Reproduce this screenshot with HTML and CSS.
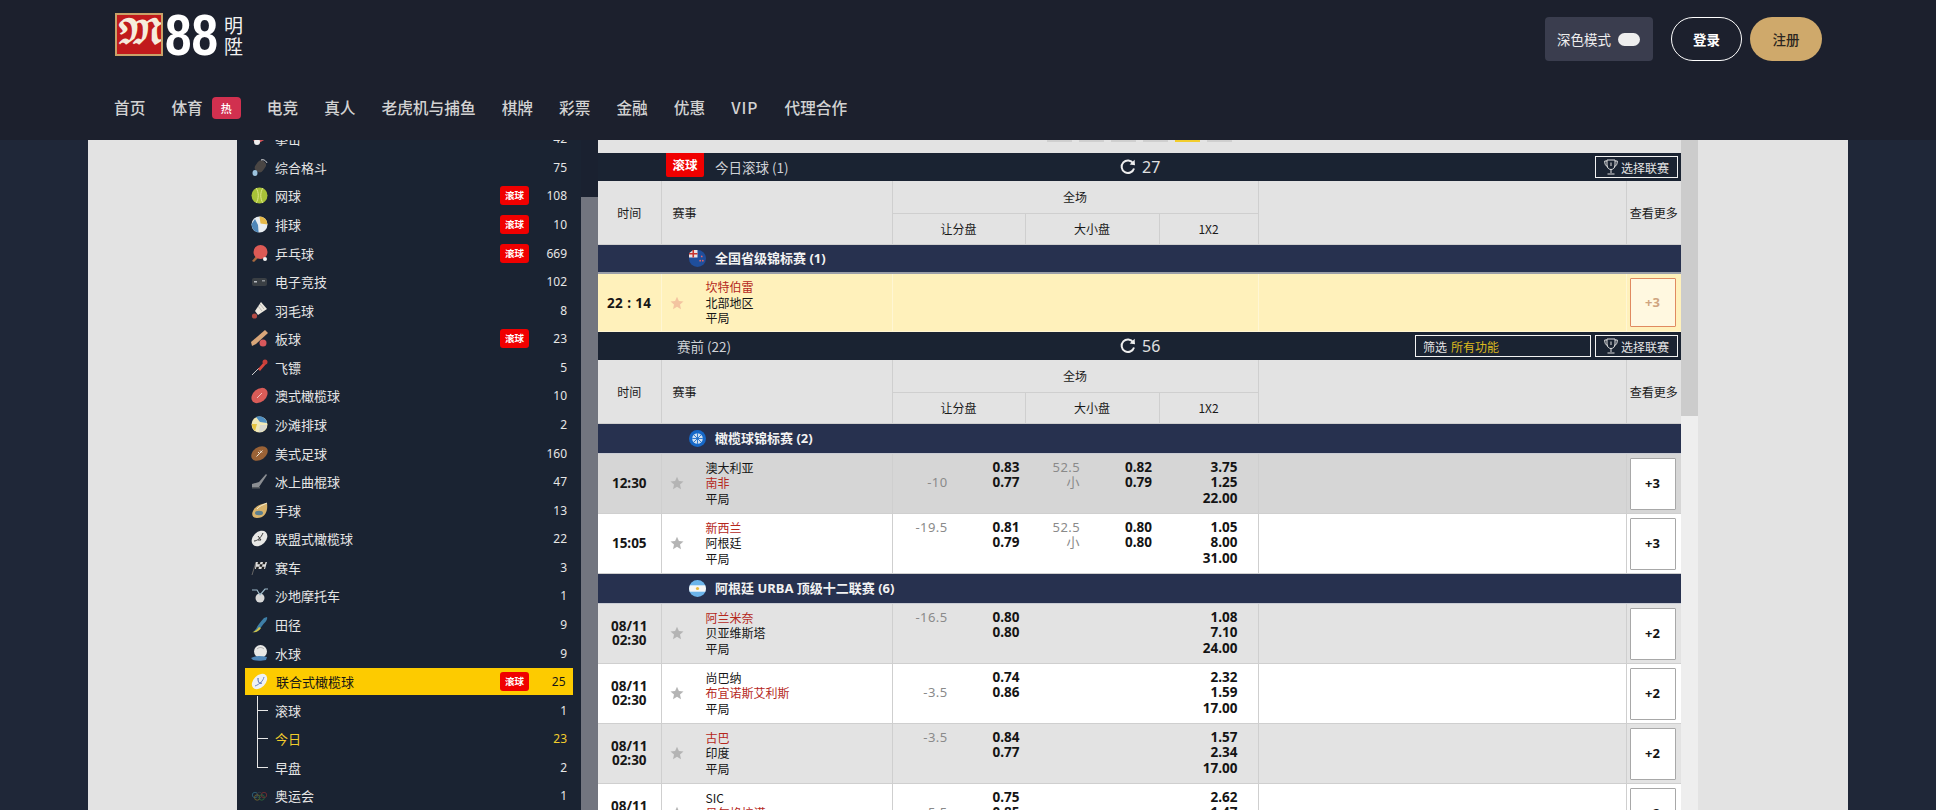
FILE: index.html
```html
<!DOCTYPE html>
<html lang="zh-CN">
<head>
<meta charset="utf-8">
<title>M88 明陞 - 体育</title>
<link rel="stylesheet" href="styles.css">
</head>
<body>
<svg class="defs" width="0" height="0" aria-hidden="true">
  <symbol id="refresh" viewBox="0 0 16 16"><path d="M13.2 4.2A6.3 6.3 0 1 0 14 9.5" fill="none" stroke="currentColor" stroke-width="2"/><path d="M9.6 5.4 15 6.2 14.6 .8z" fill="currentColor"/></symbol>
  <symbol id="trophy" viewBox="0 0 14 16"><path d="M3 1h8v5c0 3-2 4.500-4 4.500S3 9 3 6zM3 2H.7c0 3 .8 5 3 5.500M11 2h2.300c0 3-.8 5-3 5.500M7 10.500V14M3.500 15h7M7 3.500V7" fill="none" stroke="currentColor" stroke-width="1"/></symbol>
  <symbol id="star" viewBox="0 0 14 14"><path d="M7 .8 8.900 5.100 13.500 5.500 10 8.600 11 13.200 7 10.800 3 13.200 4 8.600 .5 5.500 5.100 5.100z" fill="currentColor"/></symbol>
</svg>

<div class="app">
  <header class="top">
    <div class="top-row">
      <a class="logo">
        <span class="logo-m">&#x1D578;</span>
        <span class="logo-88">88</span>
        <span class="logo-cn">明<br>陞</span>
      </a>
      <div class="top-actions">
        <div class="mode"><span>深色模式</span><span class="toggle"></span></div>
        <a class="btn-login">登录</a>
        <a class="btn-join">注册</a>
      </div>
    </div>
    <nav class="nav">
      <a>首页</a>
      <a class="nav-hot">体育<span class="hot">热</span></a>
      <a>电竞</a><a>真人</a><a>老虎机与捕鱼</a><a>棋牌</a><a>彩票</a><a>金融</a><a>优惠</a><a class="nav-vip">VIP</a><a>代理合作</a>
    </nav>
  </header>

  <main class="stage">
    <div class="page">
      <aside class="side">
        <ul class="sports">
          <li class="sport"><svg class="ic" viewBox="0 0 17 17"><path d="M2 10 12 3l3 6-9 5z" fill="#d6545a"/><circle cx="6" cy="12" r="3" fill="#eee"/></svg><span class="name">拳击</span><span class="count">42</span></li>
          <li class="sport"><svg class="ic" viewBox="0 0 17 17"><rect x="5" y="1" width="9" height="12" rx="4" transform="rotate(35 9 7)" fill="#4a4644"/><ellipse cx="4" cy="14" rx="2.500" ry="3" fill="#9cc3de"/><path d="M10 1c3-1 5 1 6 3" stroke="#ddd" fill="none"/></svg><span class="name">综合格斗</span><span class="count">75</span></li>
          <li class="sport"><svg class="ic" viewBox="0 0 17 17"><circle cx="8.500" cy="8.500" r="8" fill="#a8c238"/><path d="M5 1c3 4 3 11 0 15M12 1c-3 4-3 11 0 15" stroke="#dfe88a" fill="none"/></svg><span class="name">网球</span><span class="live">滚球</span><span class="count">108</span></li>
          <li class="sport"><svg class="ic" viewBox="0 0 17 17"><circle cx="8.500" cy="8.500" r="8" fill="#e9eef2"/><path d="M8.500.5a8 8 0 0 1 8 8l-7-1z" fill="#e5b94a"/><path d="M.6 8a8 8 0 0 0 7 8.500L7 9 4 3z" fill="#4f86b8"/></svg><span class="name">排球</span><span class="live">滚球</span><span class="count">10</span></li>
          <li class="sport"><svg class="ic" viewBox="0 0 17 17"><path d="M1 16l5-6 2 2-5 5z" fill="#a8693e"/><circle cx="9.500" cy="7" r="7" fill="#dc5a55"/><circle cx="14" cy="14" r="2" fill="#f4f4f4"/></svg><span class="name">乒乓球</span><span class="live">滚球</span><span class="count">669</span></li>
          <li class="sport"><svg class="ic" viewBox="0 0 17 17"><rect x="1" y="5" width="15" height="8" rx="2" fill="#3a3f44"/><rect x="3" y="8" width="3" height="1.500" fill="#b8bcc0"/><rect x="11" y="7" width="3" height="1.500" fill="#8f9498"/></svg><span class="name">电子竞技</span><span class="count">102</span></li>
          <li class="sport"><svg class="ic" viewBox="0 0 17 17"><path d="M10 0 16 7 7 13 4 9z" fill="#ece8df"/><path d="M9 2l4 5M7 4l4 5" stroke="#9a9a9a" stroke-width=".6"/><circle cx="3.500" cy="14" r="2.600" fill="#b24a44"/></svg><span class="name">羽毛球</span><span class="count">8</span></li>
          <li class="sport"><svg class="ic" viewBox="0 0 17 17"><path d="M14 0l3 3L5 14 1 16 0 12z" fill="#d9a679"/><circle cx="12" cy="13" r="3.500" fill="#d8585c"/></svg><span class="name">板球</span><span class="live">滚球</span><span class="count">23</span></li>
          <li class="sport"><svg class="ic" viewBox="0 0 17 17"><path d="M1 16 8 9" stroke="#ccc"/><path d="M7 10 13 3l2 2-6 7z" fill="#d9483f"/><circle cx="14" cy="3" r="2.500" fill="#c93f3a"/></svg><span class="name">飞镖</span><span class="count">5</span></li>
          <li class="sport"><svg class="ic" viewBox="0 0 17 17"><ellipse cx="8.500" cy="8.500" rx="9" ry="6.500" transform="rotate(-40 8.500 8.500)" fill="#d95c58"/><path d="M6 11l5-5" stroke="#f2c4c0"/></svg><span class="name">澳式橄榄球</span><span class="count">10</span></li>
          <li class="sport"><svg class="ic" viewBox="0 0 17 17"><circle cx="8.500" cy="8.500" r="8" fill="#f1e9b8"/><path d="M5 1a8 8 0 0 1 11 6L9 6z" fill="#4e8ec2"/><path d="M16 9a8 8 0 0 1-8 7l1-7z" fill="#d8d8d0"/><path d="M1 8a8 8 0 0 0 3 7l2-7z" fill="#e6c440"/></svg><span class="name">沙滩排球</span><span class="count">2</span></li>
          <li class="sport"><svg class="ic" viewBox="0 0 17 17"><ellipse cx="8.500" cy="8.500" rx="9" ry="6.300" transform="rotate(-35 8.500 8.500)" fill="#9a6236"/><path d="M5.500 11.500l6-6M7 7l2 2M9 5.500l2 2" stroke="#f0e4d4"/></svg><span class="name">美式足球</span><span class="count">160</span></li>
          <li class="sport"><svg class="ic" viewBox="0 0 17 17"><path d="M15 1 8 9 1 11v3h7l8-12z" fill="#8b8e93"/><rect x="1" y="14" width="8" height="1.500" fill="#555a60"/></svg><span class="name">冰上曲棍球</span><span class="count">47</span></li>
          <li class="sport"><svg class="ic" viewBox="0 0 17 17"><path d="M16 1c1 7-1 15-10 15C2 16 0 13 2 9c2-5 8-7 14-8z" fill="#d9b36c"/><ellipse cx="8" cy="11" rx="4" ry="2.200" fill="#5c7f90"/><path d="M16 1c-4 2-8 3-10 6" stroke="#f2ead0" fill="none"/></svg><span class="name">手球</span><span class="count">13</span></li>
          <li class="sport"><svg class="ic" viewBox="0 0 17 17"><ellipse cx="8.500" cy="8.500" rx="9" ry="6.500" transform="rotate(-45 8.500 8.500)" fill="#e8e8e6"/><path d="M3 11c3 0 7-3 9-8M7 6l3 4h-3" stroke="#3a3a3a" fill="none"/></svg><span class="name">联盟式橄榄球</span><span class="count">22</span></li>
          <li class="sport"><svg class="ic" viewBox="0 0 17 17"><path d="M1 16 5 3" stroke="#666"/><path d="M5 3h11l-2 7H4z" fill="#ddd"/><path d="M7 3h2.500l-.6 2.300H6.400zM12 3h2.500l-.6 2.300h-2.500zM9 5.300h2.500L11 7.700H8.400zM5.500 7.700H8L7.500 10H4.800zM11 7.700h2.500L13 10h-2.600z" fill="#222"/></svg><span class="name">赛车</span><span class="count">3</span></li>
          <li class="sport"><svg class="ic" viewBox="0 0 17 17"><circle cx="9" cy="11" r="4.500" fill="#d8d8d8"/><path d="M1 3h5l3 5M9 8l5-6h3" stroke="#9db9c9" stroke-width="1.200" fill="none"/></svg><span class="name">沙地摩托车</span><span class="count">1</span></li>
          <li class="sport"><svg class="ic" viewBox="0 0 17 17"><path d="M16 1c1 3-2 5-5 9-2 3-5 6-8 6 0-2 2-2 3-5 1-2 4-6 7-9z" fill="#3e7fa8"/><path d="M1 16c2 0 5-2 7-5l2 1c-2 3-5 5-9 4z" fill="#cfc24a"/></svg><span class="name">田径</span><span class="count">9</span></li>
          <li class="sport"><svg class="ic" viewBox="0 0 17 17"><circle cx="9.500" cy="6.500" r="6.500" fill="#e8e8e6"/><path d="M6 4c2-2 5-2 7 0" stroke="#aaa" fill="none"/><path d="M0 13c5-3 11-2 16-1l-1 3c-4 1-10 1-13 0z" fill="#4f86b8"/></svg><span class="name">水球</span><span class="count">9</span></li>
          <li class="sport is-active"><svg class="ic" viewBox="0 0 17 17"><ellipse cx="8.500" cy="8.500" rx="9" ry="6" transform="rotate(-45 8.500 8.500)" fill="#eef1f5"/><path d="M4 13C9 11 12 8 13 4" stroke="#6b86c0" fill="none"/><path d="M7 5c0 4 1 6 4 5" stroke="#3b5aa8" fill="none"/></svg><span class="name">联合式橄榄球</span><span class="live">滚球</span><span class="count">25</span></li>
          <li class="sport"><span class="tree"></span><span class="name">滚球</span><span class="count">1</span></li>
          <li class="sport is-current"><span class="tree"></span><span class="name">今日</span><span class="count">23</span></li>
          <li class="sport"><span class="tree tree-end"></span><span class="name">早盘</span><span class="count">2</span></li>
          <li class="sport"><svg class="ic" viewBox="0 0 17 17"><g fill="none" stroke-width="1"><circle cx="4" cy="8" r="2.700" stroke="#2a5a70"/><circle cx="8.500" cy="8" r="2.700" stroke="#33393f"/><circle cx="13" cy="8" r="2.700" stroke="#6a2c30"/><circle cx="6.200" cy="10.500" r="2.700" stroke="#6a6030"/><circle cx="10.700" cy="10.500" r="2.700" stroke="#2a5f3a"/></g></svg><span class="name">奥运会</span><span class="count">1</span></li>
        </ul>
      </aside>
      <div class="side-scroll"><div class="side-thumb"></div></div>

      <section class="board">
        <div class="pager"><i></i><i></i><i></i><i></i><i class="on"></i><i></i></div>

        <div class="bar">
          <div class="bar-left"><span class="tag-live">滚球</span><span class="bar-title">今日滚球 (1)</span></div>
          <div class="bar-mid"><svg class="refresh"><use href="#refresh"/></svg><span>27</span></div>
          <div class="bar-right"><a class="pick"><svg class="trophy"><use href="#trophy"/></svg>选择联赛</a></div>
        </div>
        <table class="grid">
          <colgroup><col class="c-time"><col class="c-event"><col class="c-hdp"><col class="c-ou"><col class="c-x"><col class="c-blank"><col class="c-more"></colgroup>
          <thead>
            <tr><th rowspan="2">时间</th><th rowspan="2" class="th-event">赛事</th><th colspan="3">全场</th><th rowspan="2"></th><th rowspan="2">查看更多</th></tr>
            <tr><th>让分盘</th><th>大小盘</th><th>1X2</th></tr>
          </thead>
          <tbody>
            <tr class="league league-first"><td colspan="7"><div class="league-in"><svg class="flag" viewBox="0 0 16 16"><circle cx="8" cy="8" r="8" fill="#1f4e9c"/><path d="M0 7V3L4 0h4v7z" fill="#e9e2e4"/><path d="M4 0v7M0 3.500h8" stroke="#c8342f" stroke-width="1.500"/><circle cx="12" cy="6" r=".8" fill="#e66"/><circle cx="10.500" cy="10" r=".8" fill="#e66"/><circle cx="13" cy="10" r=".8" fill="#e66"/></svg>全国省级锦标赛 (1)</div></td></tr>
            <tr class="match is-live">
              <td class="time">22 : 14</td>
              <td><div class="event"><svg class="star"><use href="#star"/></svg><div class="teams"><span class="fav">坎特伯雷</span><span>北部地区</span><span>平局</span></div></div></td>
              <td></td><td></td><td></td><td></td>
              <td><a class="more">+3</a></td>
            </tr>
          </tbody>
        </table>

        <div class="bar">
          <div class="bar-left"><span class="bar-title bar-title-pre">赛前 (22)</span></div>
          <div class="bar-mid"><svg class="refresh"><use href="#refresh"/></svg><span>56</span></div>
          <div class="bar-right"><a class="filter">筛选<b>所有功能</b></a><a class="pick"><svg class="trophy"><use href="#trophy"/></svg>选择联赛</a></div>
        </div>
        <table class="grid">
          <colgroup><col class="c-time"><col class="c-event"><col class="c-hdp"><col class="c-ou"><col class="c-x"><col class="c-blank"><col class="c-more"></colgroup>
          <thead>
            <tr><th rowspan="2">时间</th><th rowspan="2" class="th-event">赛事</th><th colspan="3">全场</th><th rowspan="2"></th><th rowspan="2">查看更多</th></tr>
            <tr><th>让分盘</th><th>大小盘</th><th>1X2</th></tr>
          </thead>
          <tbody>
            <tr class="league"><td colspan="7"><div class="league-in"><svg class="flag" viewBox="0 0 16 16"><circle cx="8" cy="8" r="8" fill="#1668c8"/><circle cx="8" cy="8" r="5" fill="#cfe0f2"/><path d="M8 3v10M3 8h10M4.500 4.500l7 7M11.500 4.500l-7 7" stroke="#1668c8" stroke-width=".8"/></svg>橄榄球锦标赛 (2)</div></td></tr>
            <tr class="match is-dark">
              <td class="time">12:30</td>
              <td><div class="event"><svg class="star"><use href="#star"/></svg><div class="teams"><span>澳大利亚</span><span class="fav">南非</span><span>平局</span></div></div></td>
              <td><div class="market"><div class="line"><span>&nbsp;</span><span>-10</span></div><div class="odds"><span>0.83</span><span>0.77</span></div></div></td>
              <td><div class="market"><div class="line"><span>52.5</span><span>小</span></div><div class="odds"><span>0.82</span><span>0.79</span></div></div></td>
              <td><div class="odds x"><span>3.75</span><span>1.25</span><span>22.00</span></div></td>
              <td></td>
              <td><a class="more">+3</a></td>
            </tr>
            <tr class="match">
              <td class="time">15:05</td>
              <td><div class="event"><svg class="star"><use href="#star"/></svg><div class="teams"><span class="fav">新西兰</span><span>阿根廷</span><span>平局</span></div></div></td>
              <td><div class="market"><div class="line"><span>-19.5</span></div><div class="odds"><span>0.81</span><span>0.79</span></div></div></td>
              <td><div class="market"><div class="line"><span>52.5</span><span>小</span></div><div class="odds"><span>0.80</span><span>0.80</span></div></div></td>
              <td><div class="odds x"><span>1.05</span><span>8.00</span><span>31.00</span></div></td>
              <td></td>
              <td><a class="more">+3</a></td>
            </tr>
            <tr class="league"><td colspan="7"><div class="league-in"><svg class="flag" viewBox="0 0 16 16"><clipPath id="ar"><circle cx="8" cy="8" r="8"/></clipPath><g clip-path="url(#ar)"><rect width="16" height="16" fill="#6cb4ea"/><rect y="5" width="16" height="6" fill="#f6f6f6"/><circle cx="8" cy="8" r="1.500" fill="#e8b93c"/></g></svg>阿根廷 URBA 顶级十二联赛 (6)</div></td></tr>
            <tr class="match is-grey">
              <td class="time">08/11<br>02:30</td>
              <td><div class="event"><svg class="star"><use href="#star"/></svg><div class="teams"><span class="fav">阿兰米奈</span><span>贝亚维斯塔</span><span>平局</span></div></div></td>
              <td><div class="market"><div class="line"><span>-16.5</span></div><div class="odds"><span>0.80</span><span>0.80</span></div></div></td>
              <td></td>
              <td><div class="odds x"><span>1.08</span><span>7.10</span><span>24.00</span></div></td>
              <td></td>
              <td><a class="more">+2</a></td>
            </tr>
            <tr class="match">
              <td class="time">08/11<br>02:30</td>
              <td><div class="event"><svg class="star"><use href="#star"/></svg><div class="teams"><span>尚巴纳</span><span class="fav">布宜诺斯艾利斯</span><span>平局</span></div></div></td>
              <td><div class="market"><div class="line"><span>&nbsp;</span><span>-3.5</span></div><div class="odds"><span>0.74</span><span>0.86</span></div></div></td>
              <td></td>
              <td><div class="odds x"><span>2.32</span><span>1.59</span><span>17.00</span></div></td>
              <td></td>
              <td><a class="more">+2</a></td>
            </tr>
            <tr class="match is-grey">
              <td class="time">08/11<br>02:30</td>
              <td><div class="event"><svg class="star"><use href="#star"/></svg><div class="teams"><span class="fav">古巴</span><span>印度</span><span>平局</span></div></div></td>
              <td><div class="market"><div class="line"><span>-3.5</span></div><div class="odds"><span>0.84</span><span>0.77</span></div></div></td>
              <td></td>
              <td><div class="odds x"><span>1.57</span><span>2.34</span><span>17.00</span></div></td>
              <td></td>
              <td><a class="more">+2</a></td>
            </tr>
            <tr class="match">
              <td class="time">08/11<br>02:30</td>
              <td><div class="event"><svg class="star"><use href="#star"/></svg><div class="teams"><span>SIC</span><span class="fav">贝尔格拉诺</span><span>平局</span></div></div></td>
              <td><div class="market"><div class="line"><span>&nbsp;</span><span>-5.5</span></div><div class="odds"><span>0.75</span><span>0.85</span></div></div></td>
              <td></td>
              <td><div class="odds x"><span>2.62</span><span>1.47</span><span>17.00</span></div></td>
              <td></td>
              <td><a class="more">+2</a></td>
            </tr>
          </tbody>
        </table>
      </section>

      <div class="board-scroll"><div class="board-thumb"></div></div>
    </div>
  </main>
</div>
</body>
</html>
```

FILE: styles.css
```css
* { box-sizing: border-box; }
html, body { margin: 0; height: 100%; overflow: hidden; }
body {
  background: #1f2738;
  font-family: "Noto Sans", "Noto Sans CJK SC", sans-serif;
  font-size: 12px;
  color: #111;
}
a { color: inherit; text-decoration: none; }
.defs { display: block; height: 0; }
.app { display: flex; flex-direction: column; height: 810px; overflow: hidden; }

/* header */
.top { height: 140px; flex: none; background: #1c202d; padding: 13px 114px 0 114px; }
.top-row { display: flex; justify-content: space-between; align-items: flex-start; height: 61px; }
.logo { display: flex; align-items: flex-start; height: 43px; color: #fff; margin-left: 1px; }
.logo-m {
  width: 48px; height: 43px; background: #c11a1c; border: 2px solid #c9a268; overflow: hidden;
  color: #f6ecdc; font: 700 31px/37px "DejaVu Math TeX Gyre", "DejaVu Serif", "Liberation Serif", serif; text-align: center;
}
.logo-88 {
  width: 56px; height: 43px; margin-left: 2px;
  font: 700 58px/43px "Liberation Sans", sans-serif;
  transform: scaleX(.82); transform-origin: 0 50%;
  letter-spacing: 0; white-space: nowrap;
}
.logo-cn { margin-left: 3px; font: 400 19px/21px "Noto Sans CJK SC", sans-serif; width: 20px; padding-top: 1px; color: #f2f2f2; }
.top-actions { display: flex; align-items: flex-start; margin-top: 4px; }
.mode {
  width: 108px; height: 44px; background: #3a3d4e; border-radius: 4px; color: #eee;
  display: flex; align-items: center; padding-left: 12px; gap: 7px; font-size: 13.500px;
  font-family: "Noto Sans CJK SC", sans-serif;
}
.toggle { width: 22px; height: 13px; background: #eee; border-radius: 7px; }
.btn-login, .btn-join {
  height: 44px; border-radius: 22px; display: flex; align-items: center; justify-content: center;
  font-size: 13.500px; font-family: "Noto Sans CJK SC", sans-serif;
}
.btn-login { width: 71px; margin-left: 18px; border: 1px solid #fff; color: #fff; font-weight: 700; }
.btn-join { width: 72px; margin-left: 8px; background: #cfa96b; color: #2b2620; font-weight: 500; }
.nav {
  display: flex; gap: 26px; align-items: center; height: 22px; margin-top: 23px;
  color: #d2d2d2; font: 500 15.700px/22px "Noto Sans CJK SC", sans-serif;
}
.nav-hot { display: flex; align-items: center; }
.nav-vip { letter-spacing: 1px; }
.hot {
  width: 29px; height: 22px; margin-left: 9px; background: #d1304f; border-radius: 4px;
  color: #fff; font-size: 11px; text-align: center; line-height: 22px;
}

/* stage */
.stage { flex: 1; overflow: hidden; min-height: 0; }
.page { width: 1760px; margin: 0 auto; height: 100%; background: #e3e3e3; display: flex; padding-left: 149px; overflow: hidden; }

/* sidebar */
.side { width: 344px; flex: none; background: #1a2332; overflow: hidden; padding: 0 8px; }
.sports { list-style: none; margin: -15.600px 0 0; padding: 0; }
.sport {
  height: 28.580px; display: flex; align-items: center; padding: 0 6px;
  color: #e6e6e6; font-size: 13px;
}
.ic { width: 17px; height: 17px; flex: none; margin-right: 7px; overflow: visible; }
.name { flex: 1; font-family: "Noto Sans CJK SC", sans-serif; white-space: nowrap; }
.live {
  width: 29px; height: 19px; background: #f00000; border-radius: 3px; color: #fff;
  font: 700 9.500px/19px "Noto Sans CJK SC", sans-serif; text-align: center;
}
.count { width: 38px; text-align: right; font-size: 12px; }
.is-active { background: #fdcb00 content-box; color: #161616; padding: .8px 0; }
.is-active .ic { margin-left: 6px; margin-right: 8px; }
.is-active .count { width: 36.500px; margin-right: 7.500px; }
.is-current { color: #f2cd2c; }
.tree {
  width: 17px; height: 100%; flex: none; margin-right: 7px;
  background:
    linear-gradient(#e6e6e6, #e6e6e6) 6px 0 / 1px 100% no-repeat,
    linear-gradient(#e6e6e6, #e6e6e6) 6px 50% / 11px 1px no-repeat;
}
.tree-end {
  background:
    linear-gradient(#e6e6e6, #e6e6e6) 6px 0 / 1px 50% no-repeat,
    linear-gradient(#e6e6e6, #e6e6e6) 6px 50% / 11px 1px no-repeat;
}
.side-scroll { width: 17px; flex: none; background: #1a2130; padding-top: 57px; }
.side-thumb { height: 100%; background: #72757f; }

/* board */
.board { width: 1083px; flex: none; overflow: hidden; background: #e3e3e3; }
.pager { height: 13px; display: flex; gap: 7px; padding-left: 449px; align-items: flex-start; }
.pager i { width: 25px; height: 2px; background: #cfcfcf; }
.pager .on { background: #f2cd2c; }
.bar { height: 28px; background: #1a2332; color: #ddd; display: grid; grid-template-columns: 522px 100px 1fr; align-items: start; }
.bar-left { display: flex; height: 28px; align-items: center; font-family: "Noto Sans CJK SC", sans-serif; font-size: 13.500px; }
.tag-live {
  width: 38px; height: 24px; margin-left: 68px; margin-top: -4px; background: #f00000; color: #fff;
  border-radius: 0 0 2px 2px; font-weight: 700; font-size: 12.500px; line-height: 24px; text-align: center;
}
.bar-title { margin-left: 11px; color: #cfd2d6; line-height: 28px; }
.bar-title-pre { margin-left: 79px; }
.bar-mid { display: flex; align-items: center; height: 28px; color: #e0e0e0; font-size: 16px; gap: 6px; }
.refresh { width: 16px; height: 16px; color: #eee; flex: none; }
.bar-right { display: flex; justify-content: flex-end; gap: 4px; padding: 3px 3px 0 0; }
.pick, .filter {
  height: 22px; border: 1px solid #f2f2f2; display: flex; align-items: center;
  color: #e4e4e4; font-family: "Noto Sans CJK SC", sans-serif; font-size: 12px;
}
.pick { width: 83px; padding-left: 8px; }
.filter { width: 176px; padding-left: 7px; }
.filter b { font-weight: 400; color: #dcb91f; margin-left: 4px; }
.trophy { width: 14px; height: 16px; color: #e0e0e0; margin-right: 3px; flex: none; }

.grid { width: 1083px; table-layout: fixed; border-collapse: collapse; font-family: "Noto Sans CJK SC", sans-serif; }
.c-time { width: 63px; } .c-event { width: 231px; } .c-hdp { width: 133px; }
.c-ou { width: 134px; } .c-x { width: 99px; } .c-blank { width: 368px; } .c-more { width: 55px; }
.grid th {
  height: 32px; padding: 0; background: #e3e3e3; border: 1px solid #cfcfcf; border-top: 0;
  font-weight: 400; font-size: 12px; color: #1a1a1a; text-align: center;
}
.grid thead tr:last-child th { height: 31px; }
.grid th:first-child { border-left: 0; }
.grid th:last-child { border-right: 0; }
.grid .th-event { text-align: left; padding-left: 11px; }

.league td { height: 30px; padding: 0; background: #27314f; border-bottom: 1px solid #c9ccd4; }
.league-first td { height: 29px; border-bottom: 2px solid #9a9ea8; }
.league-in { display: flex; align-items: center; height: 28px; padding-left: 91px; color: #f2f2f2; font: 700 13px/27px "Noto Sans", "Noto Sans CJK SC", sans-serif; }
.league-first .league-in { height: 27px; }
.flag { width: 17px; height: 17px; margin-right: 9px; flex: none; }

.match td { height: 60px; padding: 0; background: #fff; border: 1px solid #cfcfcf; border-width: 0 1px 1px 0; vertical-align: top; }
.match td:last-child, .match td:nth-child(3), .match td:nth-child(4) { border-right: 0; }
.is-dark td { background: #d6d6d6; }
.is-grey td { background: #e3e3e3; }
.is-live td { height: 58px; background: #fff1bb; border-color: #fff6d4; }
.match .time {
  vertical-align: middle; text-align: center; font: 700 13.500px/14px "Noto Sans", sans-serif; color: #161616;
}
.is-live .time { letter-spacing: .4px; }
.event { display: flex; align-items: center; height: 59px; padding-left: 8px; }
.is-live .event { height: 57px; }
.star { width: 14px; height: 14px; color: #b4b4b4; flex: none; margin-right: 22px; }
.is-live .star { color: #f3c4a0; }
.teams { display: flex; flex-direction: column; font-size: 12px; line-height: 15.500px; color: #151515; }
.fav { color: #b5281c; }
.market { display: grid; grid-template-columns: 55px 72px; padding-top: 6px; }
.line, .odds { display: flex; flex-direction: column; align-items: flex-end; line-height: 15.500px; }
.line { color: #8a8a8a; font-family: "Noto Sans", "Noto Sans CJK SC", sans-serif; font-size: 13px; letter-spacing: .4px; }
.odds { font: 700 13.500px/15.500px "Noto Sans", sans-serif; color: #141414; }
.odds.x { padding: 6px 20px 0 0; }
.more {
  display: flex; width: 46px; height: 52px; margin: 4px 0 0 3px; background: #fff;
  border: 1px solid #a8a8a8; border-radius: 1px; align-items: center; justify-content: center;
  font: 700 13px/1 "Noto Sans", sans-serif; color: #141414;
}
.is-live .more { height: 49px; background: #fff8e0; border-color: #e08a60; color: #cfa57f; }

/* board scroll */
.board-scroll { width: 17px; flex: none; background: #eeeeee; }
.board-thumb { height: 276px; background: #cccccc; }
```
